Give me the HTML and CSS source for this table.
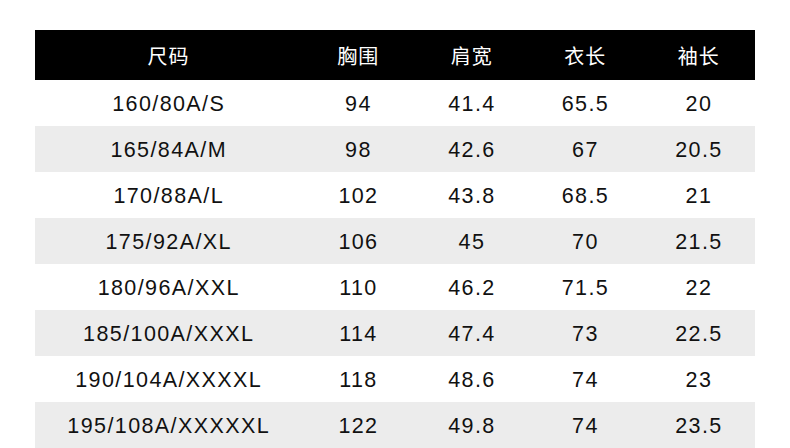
FILE: index.html
```html
<!DOCTYPE html>
<html lang="zh-CN">
<head>
<meta charset="utf-8">
<title>尺码表</title>
<link rel="stylesheet" href="styles.css">
</head>
<body>
<div class="page">
  <div class="size-table">
    <div class="row head"><div>尺码</div><div>胸围</div><div>肩宽</div><div>衣长</div><div>袖长</div></div>
    <div class="row"><div>160/80A/S</div><div>94</div><div>41.4</div><div>65.5</div><div>20</div></div>
    <div class="row alt"><div>165/84A/M</div><div>98</div><div>42.6</div><div>67</div><div>20.5</div></div>
    <div class="row"><div>170/88A/L</div><div>102</div><div>43.8</div><div>68.5</div><div>21</div></div>
    <div class="row alt"><div>175/92A/XL</div><div>106</div><div>45</div><div>70</div><div>21.5</div></div>
    <div class="row"><div>180/96A/XXL</div><div>110</div><div>46.2</div><div>71.5</div><div>22</div></div>
    <div class="row alt"><div>185/100A/XXXL</div><div>114</div><div>47.4</div><div>73</div><div>22.5</div></div>
    <div class="row"><div>190/104A/XXXXL</div><div>118</div><div>48.6</div><div>74</div><div>23</div></div>
    <div class="row alt"><div>195/108A/XXXXXL</div><div>122</div><div>49.8</div><div>74</div><div>23.5</div></div>
  </div>
</div>
</body>
</html>
```

FILE: styles.css
```css
html, body {
  margin: 0;
  padding: 0;
  background: #ffffff;
}

.page {
  padding: 30px 35px 0 35px;
}

.size-table {
  width: 720px;
  font-family: "Liberation Sans", "Noto Sans CJK SC", sans-serif;
  color: #111111;
}

.row {
  display: grid;
  grid-template-columns: 266px 1fr 1fr 1fr 1fr;
  height: 46px;
  box-sizing: border-box;
  padding-top: 2px;
  align-items: center;
  font-size: 21.5px;
  letter-spacing: 1.4px;
  background: #ffffff;
}

.row > div {
  text-align: center;
  white-space: nowrap;
  padding-left: 1.4px;
}

.row.alt {
  background: #ececec;
}

.row.head {
  height: 50px;
  padding-top: 0;
  background: #000000;
  color: #ffffff;
  font-family: "Noto Sans CJK SC", sans-serif;
  font-size: 20px;
  letter-spacing: 1px;
}

.row.head > div {
  padding-left: 1px;
}
```
